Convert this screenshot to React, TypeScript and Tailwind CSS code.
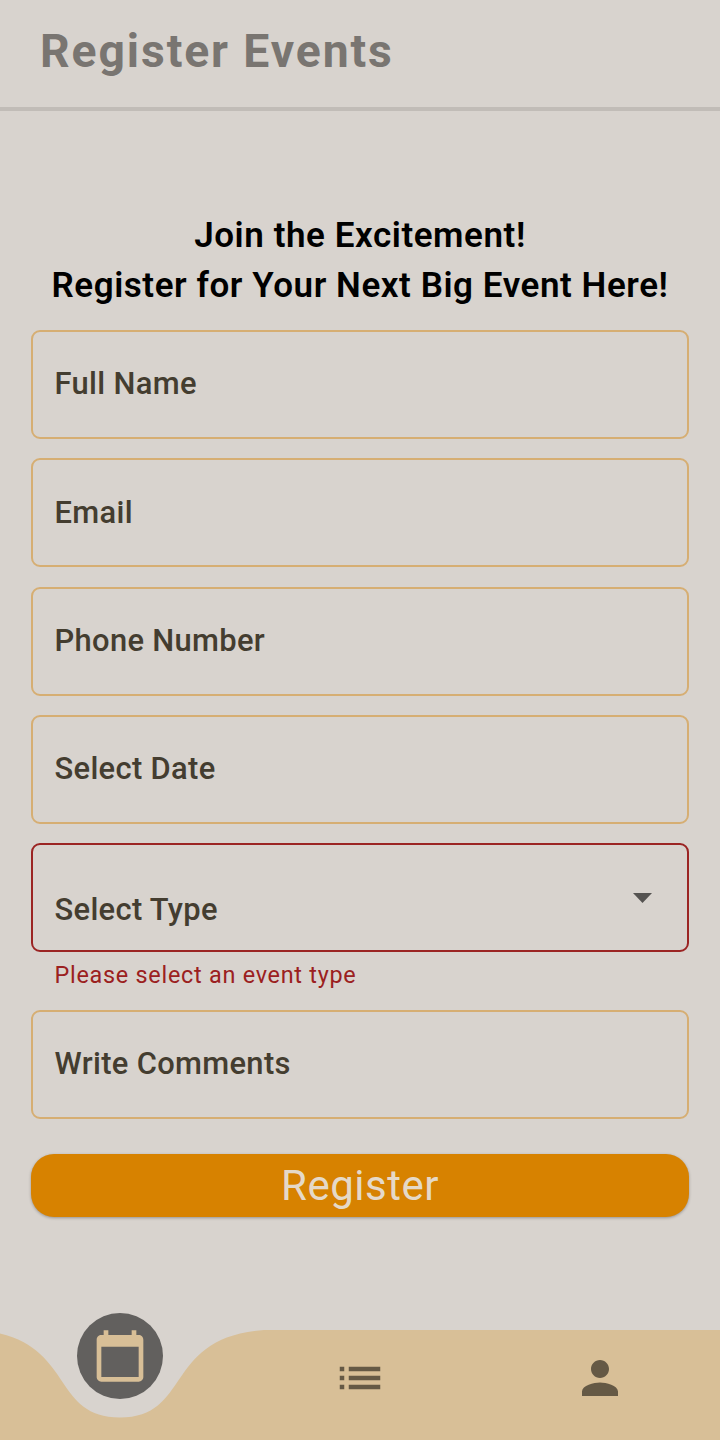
import { MdCalendarToday, MdList, MdPerson } from "react-icons/md";

function Field({ label }: { label: string }) {
  return (
    <div className="flex h-[109px] shrink-0 items-center rounded-[9px] border-2 border-[#d6ae73] px-[21.5px] pb-[0.5px] text-[30.9px] font-medium tracking-[0.33px] text-[#443d30]">
      {label}
    </div>
  );
}

export default function App() {
  return (
    <div className="flex h-[1440px] w-[720px] flex-col overflow-hidden bg-[#d8d3ce] font-['Roboto',sans-serif]">
      <header className="flex h-[111px] shrink-0 items-start border-b-4 border-[#c1bcb7] pl-[40px] pt-[22.5px]">
        <h1 className="text-[46.3px] leading-[56px] font-bold tracking-[1.9px] text-[#797571]">Register Events</h1>
      </header>

      <main className="flex flex-col px-[31px] pt-[100px]">
        <h2 className="whitespace-nowrap text-center text-[35px] leading-[50px] font-semibold tracking-[0.56px] text-black">
          Join the Excitement!
          <br />
          Register for Your Next Big Event Here!
        </h2>
        <form className="mt-[19.2px] flex flex-col">
          <div className="flex flex-col gap-[19.3px]">
            <Field label="Full Name" />
            <Field label="Email" />
            <Field label="Phone Number" />
            <Field label="Select Date" />
            <div className="flex h-[109px] items-center justify-between rounded-[9px] border-2 border-[#9b2423] pl-[21.5px] pr-[35.5px]">
              <span className="pt-[24.5px] text-[30.9px] font-medium tracking-[0.33px] text-[#443d30]">Select Type</span>
              <svg className="h-[10px] w-[19px] fill-[#555351]" viewBox="0 0 10 5" preserveAspectRatio="none">
                <path d="M0 0l5 5 5-5z" />
              </svg>
            </div>
          </div>
          <p className="mt-[6.6px] pl-[23.5px] text-[23.4px] leading-[32px] tracking-[0.74px] text-[#9b2020]">
            Please select an event type
          </p>
          <div className="mt-[19.2px] flex flex-col">
            <Field label="Write Comments" />
          </div>
          <button
            type="button"
            className="mt-[35.3px] flex h-[62.5px] items-center justify-center rounded-[23px] bg-[#d78200] pt-[1px] text-[42px] leading-[50px] tracking-[0.5px] text-[#e5d9c8] shadow-[0_1px_3px_rgba(0,0,0,0.3)]"
          >
            Register
          </button>
        </form>
      </main>

      <nav className="relative mt-auto grid h-[110px] shrink-0 grid-cols-3 text-[#655945]">
        <svg className="absolute inset-0 h-[110px] w-[720px] fill-[#d8bf97]" viewBox="0 0 720 110">
          <path d="M-24 0C76.8 7.3 48 87.5 120 87.5S163.2 7.3 264 0H720V110H-24Z" />
        </svg>
        <div className="relative flex justify-center">
          <div className="-mt-[17.5px] flex size-[86px] items-center justify-center rounded-full bg-[#62605e] text-[#d8bf97]">
            <MdCalendarToday size={56} />
          </div>
        </div>
        <div className="relative flex justify-center pt-[21px]">
          <MdList size={54} />
        </div>
        <div className="relative flex justify-center pt-[21px]">
          <MdPerson size={54} />
        </div>
      </nav>
    </div>
  );
}
